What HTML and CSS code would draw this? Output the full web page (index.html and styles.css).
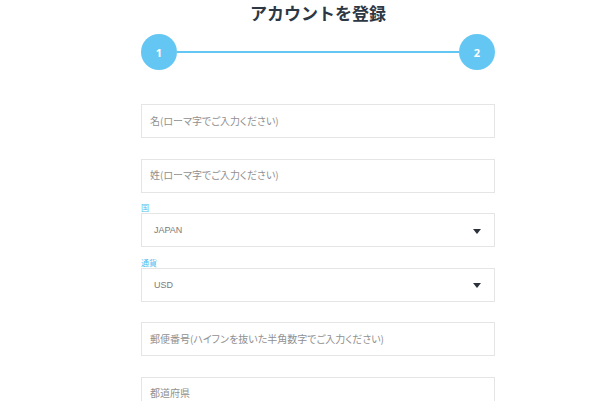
FILE: index.html
```html
<!DOCTYPE html>
<html lang="ja">
<head>
<meta charset="utf-8">
<link rel="stylesheet" href="styles.css">
</head>
<body>
<div class="page">
  <h1 class="title">アカウントを登録</h1>
  <div class="stepper">
    <div class="step">1</div>
    <div class="step-line"></div>
    <div class="step">2</div>
  </div>
  <form class="form">
    <div class="field">
      <input class="box" type="text" placeholder="名(ローマ字でご入力ください)">
    </div>
    <div class="field">
      <input class="box" type="text" placeholder="姓(ローマ字でご入力ください)">
    </div>
    <div class="field labeled">
      <div class="label">国</div>
      <div class="box select"><span>JAPAN</span><svg class="caret" width="8" height="5" viewBox="0 0 8 5"><path d="M0 0H8L4 5Z" fill="#2b323a"/></svg></div>
    </div>
    <div class="field labeled">
      <div class="label">通貨</div>
      <div class="box select"><span>USD</span><svg class="caret" width="8" height="5" viewBox="0 0 8 5"><path d="M0 0H8L4 5Z" fill="#2b323a"/></svg></div>
    </div>
    <div class="field">
      <input class="box" type="text" placeholder="郵便番号(ハイフンを抜いた半角数字でご入力ください)">
    </div>
    <div class="field">
      <input class="box" type="text" placeholder="都道府県">
    </div>
  </form>
</div>
</body>
</html>
```

FILE: styles.css
```css
html, body {
  margin: 0;
  padding: 0;
  background: #ffffff;
  overflow: hidden;
}
body {
  font-family: Roboto, "Noto Sans CJK JP", sans-serif;
}
.page {
  width: 354px;
  margin-left: 141px;
}
.title {
  margin: 0;
  height: 25px;
  line-height: 25px;
  font-size: 17px;
  font-weight: 700;
  color: #2e3844;
  text-align: center;
  font-family: "Noto Sans CJK JP", sans-serif;
}
.stepper {
  display: flex;
  align-items: center;
  margin-top: 9px;
}
.step {
  width: 36px;
  height: 36px;
  border-radius: 50%;
  background: #64c7f3;
  color: #ffffff;
  font-family: "Open Sans", sans-serif;
  font-weight: 700;
  font-size: 11px;
  display: flex;
  align-items: center;
  justify-content: center;
  flex: none;
}
.step-line {
  flex: 1;
  height: 2px;
  background: #64c7f3;
}
.form {
  display: flex;
  flex-direction: column;
  margin-top: 34px;
}
.field {
  margin-bottom: 20.5px;
}
.field.labeled {
  margin-top: -11px;
}
.label {
  height: 11px;
  line-height: 11px;
  font-size: 8px;
  color: #4fbdf0;
  font-family: "Noto Sans CJK JP", sans-serif;
}
.box {
  display: block;
  box-sizing: border-box;
  width: 354px;
  height: 34px;
  margin: 0;
  border: 1px solid #e5e5e5;
  background: #ffffff;
  outline: none;
  padding: 0 8px 2px;
  font-family: "Noto Sans CJK JP", sans-serif;
  font-feature-settings: "palt";
  font-size: 10px;
  color: #555;
}
.box::placeholder {
  color: #909090;
  opacity: 1;
}
.select {
  display: flex;
  align-items: center;
  justify-content: space-between;
  padding: 0 13px 0 12px;
  font-size: 9px;
  color: #7a7a7a;
  font-family: "Liberation Sans", Arial, sans-serif;
}
.caret {
  display: block;
  margin-top: 2px;
}
```
